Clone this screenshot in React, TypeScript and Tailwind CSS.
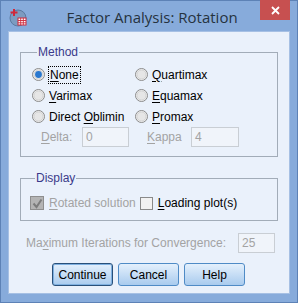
import React from "react";

const font = { fontFamily: '"Liberation Sans", Arial, sans-serif' };

function Radio({ checked }: { checked?: boolean }) {
  return (
    <svg width="13" height="13" viewBox="0 0 13 13" className="shrink-0">
      <circle cx="6.5" cy="6.5" r="6" fill="#f4f4f4" stroke="#8a8a8a" />
      <circle cx="6.5" cy="6.5" r="4.6" fill="#e6e6e6" stroke="#d0d0d0" />
      {checked && <circle cx="6.5" cy="6.5" r="3.4" fill="#2a78cf" />}
    </svg>
  );
}

function U({ children }: { children: React.ReactNode }) {
  return <span className="underline underline-offset-[2px]">{children}</span>;
}

function RadioItem({ label, checked, focus }: { label: React.ReactNode; checked?: boolean; focus?: boolean }) {
  return (
    <div className="flex h-[21px] items-center gap-[4px]">
      <Radio checked={checked} />
      <span className={focus ? "outline outline-1 outline-dotted outline-black px-[1px] leading-[16px]" : "leading-[16px]"}>
        {label}
      </span>
    </div>
  );
}

function AppIcon() {
  return (
    <svg width="20" height="20" viewBox="0 0 20 20">
      <circle cx="10" cy="11" r="8" fill="#7c9bc0" stroke="#5c7aa0" />
      <path d="M6 2v7M2.5 5.5h7" stroke="#d0283a" strokeWidth="2" />
      <rect x="10" y="11" width="8" height="7" fill="#fff" stroke="#d0283a" />
      <path d="M10 13.5h8M10 15.8h8M12.7 11v7M15.3 11v7" stroke="#d0283a" strokeWidth="0.9" />
    </svg>
  );
}

export default function App() {
  return (
    <div className="w-[298px] h-[303px] bg-[#87abdb] flex flex-col border border-[#5d82b6]" style={font}>
      <div className="h-[30px] flex items-start relative">
        <div className="absolute left-[7px] top-[6px]">
          <AppIcon />
        </div>
        <div
          className="flex-1 text-center pt-[5px] text-[15px] text-[#26333f] pl-[6px]"
          style={{ fontFamily: '"Open Sans", "Noto Sans", sans-serif' }}
        >
          Factor Analysis: Rotation
        </div>
        <div className="absolute right-[7px] top-[-1px] w-[30px] h-[20px] bg-[#c75050] flex items-center justify-center">
          <svg width="9" height="9" viewBox="0 0 9 9">
            <path d="M1 1l7 7M8 1L1 8" stroke="#fff" strokeWidth="1.8" />
          </svg>
        </div>
      </div>

      <div className="mx-[7px] mb-[8px] flex-1 bg-[#eaf1fb] border border-[#a6c0e4] text-[12px] text-black flex flex-col">
        <fieldset className="mx-[11px] mt-[13px] border border-[#a2acb8] pl-[11px] pt-[5px] pb-[9px]">
          <legend className="ml-[5px] px-[1px] text-[#3a3a8a] leading-[14px]">Method</legend>
          <div className="flex">
            <div className="w-[103px] flex flex-col">
              <RadioItem checked focus label={<><U>N</U>one</>} />
              <RadioItem label={<><U>V</U>arimax</>} />
              <RadioItem label={<>Direct <U>O</U>blimin</>} />
            </div>
            <div className="flex flex-col">
              <RadioItem label={<><U>Q</U>uartimax</>} />
              <RadioItem label={<><U>E</U>quamax</>} />
              <RadioItem label={<><U>P</U>romax</>} />
            </div>
          </div>
          <div className="flex h-[20px] items-center text-[#a3a3a3]">
            <span className="ml-[9px] w-[41px]"><U>D</U>elta:</span>
            <div className="w-[47px] h-[20px] border border-[#c9ced4] bg-[#f0f4fa] pl-[3px] leading-[18px]">0</div>
            <span className="ml-[18px] w-[44px]"><U>K</U>appa</span>
            <div className="w-[48px] h-[20px] border border-[#c9ced4] bg-[#f0f4fa] pl-[3px] leading-[18px]">4</div>
          </div>
        </fieldset>

        <fieldset className="mx-[11px] mt-[14px] border border-[#a2acb8] pl-[9px] pt-[8px] pb-[7px]">
          <legend className="ml-[5px] px-[1px] text-[#3a3a8a] leading-[14px]">Display</legend>
          <div className="flex h-[20px] items-center">
            <div className="w-[14px] h-[14px] border border-[#8e8e8e] bg-[#b4b4b4] flex items-center justify-center">
              <svg width="11" height="11" viewBox="0 0 11 11">
                <path d="M1.5 5.5l3 3.5L9.5 1.5" fill="none" stroke="#7c7c7c" strokeWidth="2" />
              </svg>
            </div>
            <span className="ml-[5px] text-[#a3a3a3]"><U>R</U>otated solution</span>
            <div className="ml-[4px] w-[13px] h-[13px] border border-[#8a8a8a] bg-[#f2f2f2]" />
            <span className="ml-[5px]"><U>L</U>oading plot(s)</span>
          </div>
        </fieldset>

        <div className="flex items-center h-[20px] mt-[12px] ml-[17px] text-[#a3a3a3]">
          <span className="w-[212px]">Ma<U>x</U>imum Iterations for Convergence:</span>
          <div className="w-[37px] h-[20px] border border-[#c9ced4] bg-[#f0f4fa] pl-[3px] leading-[18px]">25</div>
        </div>

        <div className="flex justify-center gap-[5px] mt-[10px] pr-[1px]">
          <button className="w-[61px] h-[23px] rounded-[3px] font-normal border border-[#29507a] bg-gradient-to-b from-[#e4f0fc] to-[#a9cbee] shadow-[inset_0_0_0_1px_#7fb0e0]">
            Continue
          </button>
          <button className="w-[61px] h-[23px] rounded-[3px] font-normal border border-[#4f8bc6] bg-gradient-to-b from-[#e4f0fc] to-[#a9cbee]">
            Cancel
          </button>
          <button className="w-[61px] h-[23px] rounded-[3px] font-normal border border-[#4f8bc6] bg-gradient-to-b from-[#e4f0fc] to-[#a9cbee]">
            Help
          </button>
        </div>
      </div>
    </div>
  );
}
